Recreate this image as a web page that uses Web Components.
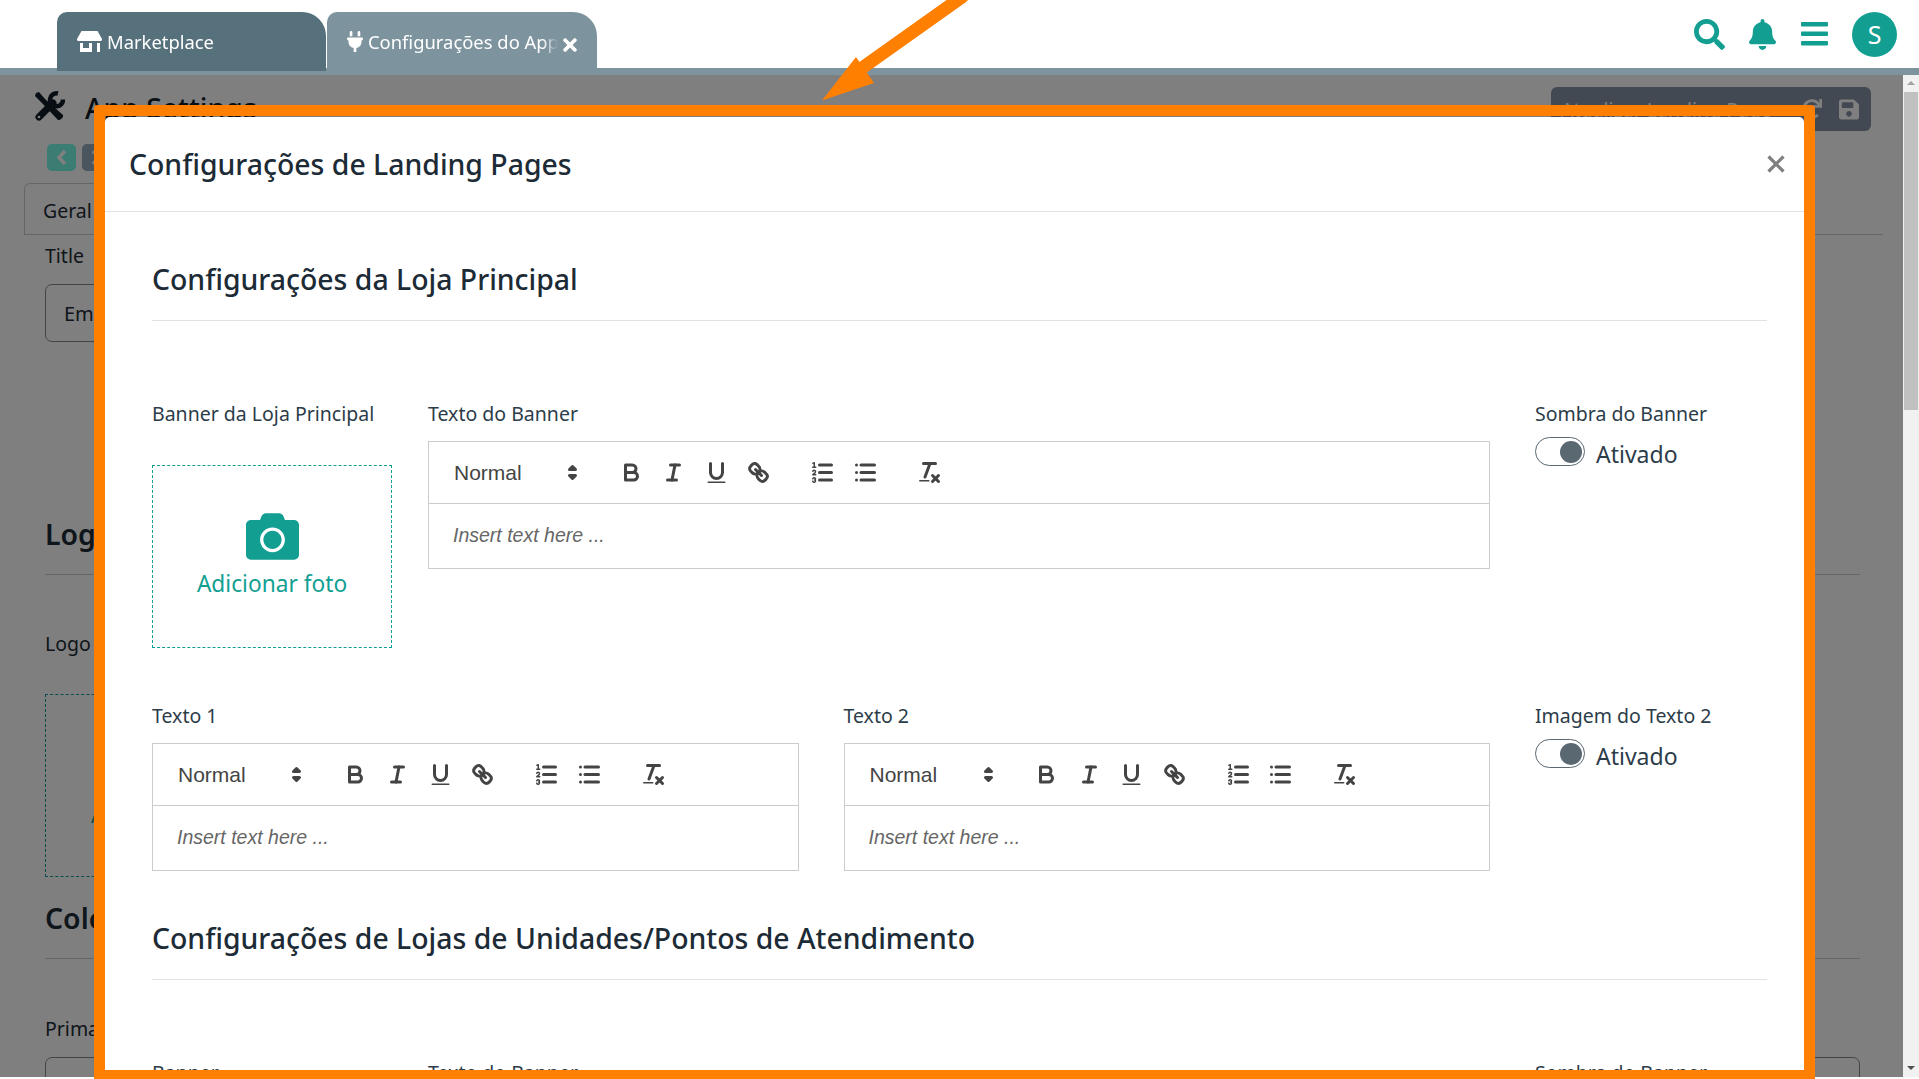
<!DOCTYPE html>
<html lang="pt-BR">
<head>
<meta charset="utf-8">
<title>Configurações de Landing Pages</title>
<style>
    html, body { margin: 0; height: 100%; overflow: hidden; background: #fff; }
    body { font-family: "Noto Sans", "Open Sans", sans-serif; color: #2c3c49; }
    .shell { position: relative; width: 1919px; height: 1079px; overflow: hidden; }
    .main { position: relative; display: flex; height: 1002px; }
    .canvas { position: relative; flex: 1; min-width: 0; overflow: hidden; }
    .row-1 { display: grid; grid-template-columns: 276px 1fr 232px; margin-top: 79px; }
    .row-2 { display: grid; grid-template-columns: 1fr 1fr 232px; column-gap: 45px; margin: 55px 0 -1px; }
    .row-1 .mid { margin-right: 45px; }
</style>
</head>
<body>
<div class="shell">
    <app-topbar>
        <app-tab icon="store" active>Marketplace</app-tab>
        <app-tab icon="plug" closable>Configurações do App</app-tab>
    </app-topbar>
    <div class="main">
        <div class="canvas">
            <settings-page></settings-page>
            <modal-dialog heading="Configurações de Landing Pages">
                <section-heading>Configurações da Loja Principal</section-heading>
                <div class="row-1">
                    <form-field label="Banner da Loja Principal"><upload-box></upload-box></form-field>
                    <form-field class="mid" label="Texto do Banner"><rich-editor></rich-editor></form-field>
                    <form-field label="Sombra do Banner"><toggle-switch>Ativado</toggle-switch></form-field>
                </div>
                <div class="row-2">
                    <form-field label="Texto 1"><rich-editor></rich-editor></form-field>
                    <form-field label="Texto 2"><rich-editor></rich-editor></form-field>
                    <form-field label="Imagem do Texto 2"><toggle-switch>Ativado</toggle-switch></form-field>
                </div>
                <section-heading>Configurações de Lojas de Unidades/Pontos de Atendimento</section-heading>
                <div class="row-1">
                    <form-field label="Banner"></form-field>
                    <form-field class="mid" label="Texto do Banner"></form-field>
                    <form-field label="Sombra do Banner"></form-field>
                </div>
            </modal-dialog>
        </div>
        <page-scrollbar></page-scrollbar>
    </div>
    <arrow-annotation></arrow-annotation>
</div>

<script>
(function(){
    const icons = {
        store: `<svg width="25" height="21" viewBox="0 0 25 21" fill="currentColor"><path d="M4.500 0h16l4.500 8c.3.8-.2 2-1.300 2H1.300C.2 10-.3 8.800 0 8z"/><path d="M3 12h12v9H3zM20 12h3v9h-3z"/><path d="M6 12h6v5H6z" fill="#56707c"/></svg>`,
        plug: `<svg width="16" height="21" viewBox="0 0 384 512" fill="currentColor"><path d="M320,32a32,32,0,0,0-64,0v96h64Zm48,128H16A16,16,0,0,0,0,176v32a16,16,0,0,0,16,16H32v32A160.070,160.070,0,0,0,160,412.800V512h64V412.800A160.070,160.070,0,0,0,352,256V224h16a16,16,0,0,0,16-16V176A16,16,0,0,0,368,160ZM128,32a32,32,0,0,0-64,0v96h64Z"/></svg>`,
        times: `<svg width="14" height="20" viewBox="0 0 352 512" fill="currentColor"><path d="M242.720 256l100.070-100.070c12.280-12.280 12.280-32.190 0-44.480l-22.240-22.240c-12.280-12.280-32.190-12.280-44.480 0L176 189.280 75.930 89.210c-12.280-12.280-32.190-12.280-44.480 0L9.210 111.450c-12.280 12.280-12.280 32.190 0 44.480L109.280 256 9.210 356.070c-12.280 12.280-12.280 32.190 0 44.480l22.240 22.240c12.280 12.280 32.200 12.280 44.480 0L176 322.720l100.070 100.070c12.280 12.280 32.200 12.280 44.480 0l22.240-22.240c12.280-12.280 12.280-32.190 0-44.480L242.720 256z"/></svg>`,
        search: `<svg width="31" height="31" viewBox="0 0 512 512" fill="currentColor"><path d="M505 442.700L405.300 343c-4.500-4.500-10.600-7-17-7H372c27.600-35.300 44-79.700 44-128C416 93.100 322.900 0 208 0S0 93.100 0 208s93.100 208 208 208c48.300 0 92.700-16.400 128-44v16.300c0 6.400 2.500 12.500 7 17l99.700 99.700c9.400 9.400 24.600 9.400 33.900 0l28.300-28.300c9.400-9.400 9.400-24.600.1-34zM208 336c-70.700 0-128-57.200-128-128 0-70.700 57.200-128 128-128 70.700 0 128 57.200 128 128 0 70.700-57.200 128-128 128z"/></svg>`,
        bell: `<svg width="27" height="31" viewBox="0 0 448 512" fill="currentColor"><path d="M224 512c35.320 0 63.970-28.650 63.970-64H160.030c0 35.350 28.650 64 63.970 64zm215.390-149.710c-19.320-20.760-55.470-51.990-55.470-154.290 0-77.700-54.480-139.900-127.940-155.160V32c0-17.670-14.320-32-31.980-32s-31.980 14.330-31.980 32v20.840C118.560 68.100 64.080 130.300 64.080 208c0 102.300-36.150 133.530-55.470 154.290-6 6.450-8.660 14.160-8.610 21.710.11 16.400 12.980 32 32.100 32h383.800c19.120 0 32-15.600 32.100-32 .05-7.550-2.610-15.270-8.610-21.710z"/></svg>`,
        camera: `<svg width="53" height="53" viewBox="0 0 512 512" fill="currentColor"><path d="M512 144v288c0 26.500-21.500 48-48 48H48c-26.500 0-48-21.500-48-48V144c0-26.500 21.500-48 48-48h88l12.300-32.900c7-18.700 24.900-31.100 44.900-31.100h125.500c20 0 37.900 12.400 44.900 31.100L376 96h88c26.500 0 48 21.500 48 48zM376 288c0-66.200-53.800-120-120-120s-120 53.800-120 120 53.800 120 120 120 120-53.800 120-120zm-32 0c0 48.500-39.500 88-88 88s-88-39.500-88-88 39.500-88 88-88 88 39.500 88 88z"/></svg>`,
        save: `<svg width="20" height="23" viewBox="0 0 448 512" fill="currentColor"><path d="M433.941 129.941l-83.882-83.882A48 48 0 0 0 316.118 32H48C21.490 32 0 53.490 0 80v352c0 26.510 21.490 48 48 48h352c26.510 0 48-21.490 48-48V163.882a48 48 0 0 0-14.059-33.941zM224 416c-35.346 0-64-28.654-64-64 0-35.346 28.654-64 64-64s64 28.654 64 64c0 35.346-28.654 64-64 64zm96-304.520V212c0 6.627-5.373 12-12 12H76c-6.627 0-12-5.373-12-12V108c0-6.627 5.373-12 12-12h228.520c3.183 0 6.235 1.264 8.485 3.515l3.480 3.480A11.996 11.996 0 0 1 320 111.480z"/></svg>`,
        redo: `<svg width="20" height="20" viewBox="0 0 512 512" fill="currentColor"><path d="M500.330 0h-47.410a12 12 0 0 0-12 12.570l4 82.760A247.420 247.420 0 0 0 256 8C119.340 8 7.900 119.530 8 256.190 8.100 393.070 119.100 504 256 504a247.100 247.100 0 0 0 166.180-63.910 12 12 0 0 0 .48-17.430l-34-34a12 12 0 0 0-16.380-.55A176 176 0 1 1 402.100 157.800l-101.530-4.870a12 12 0 0 0-12.570 12v47.410a12 12 0 0 0 12 12h200.330a12 12 0 0 0 12-12V12a12 12 0 0 0-12-12z"/></svg>`
    };

    // ---- top bar
    const topbarTemplate = document.createElement('template');
    topbarTemplate.innerHTML = `
        <style>
            :host{
                display: flex;
                box-sizing: border-box;
                height: 75px;
                padding-left: 57px;
                background: #fff;
                border-bottom: 7px solid #7d939e;
            }
            .tabs{
                display: flex;
                gap: 1px;
                align-items: flex-end;
                height: 71px;
            }
            .actions{
                display: flex;
                align-items: center;
                margin-left: auto;
                padding-right: 22px;
                color: #129f92;
            }
            .actions svg{
                display: block;
            }
            .search{ margin-right: 24px; }
            .bell{ margin-right: 25px; }
            .menu{ margin-right: 24px; }
            .avatar{
                width: 45px;
                height: 45px;
                border-radius: 50%;
                background: #129f92;
                color: #fff;
                font-size: 25px;
                line-height: 45px;
                text-align: center;
            }
        </style>
        <div class="tabs"><slot></slot></div>
        <div class="actions">
            <span class="search">${icons.search}</span>
            <span class="bell">${icons.bell}</span>
            <svg class="menu" width="27" height="24" viewBox="0 0 27 24" fill="currentColor"><rect y="0" width="27" height="4.500" rx="1"/><rect y="9.500" width="27" height="4.500" rx="1"/><rect y="19" width="27" height="4.500" rx="1"/></svg>
            <div class="avatar">S</div>
        </div>
    `;
    window.customElements.define('app-topbar', class extends HTMLElement {
        constructor() {
            super();
            this.attachShadow({mode: 'open'});
            this.shadowRoot.appendChild(topbarTemplate.content.cloneNode(true));
        }
    });

    // ---- tab
    const tabTemplate = document.createElement('template');
    tabTemplate.innerHTML = `
        <style>
            :host{
                display: flex;
                align-items: flex-start;
                box-sizing: border-box;
                width: 270px;
                height: 59px;
                padding: 18px 20px 0 20px;
                background: #7d939e;
                border-radius: 10px 24px 0 0;
                color: #fff;
                font-size: 18.400px;
                line-height: 24px;
            }
            :host([active]){
                background: #56707c;
                width: 269px;
            }
            .icon{
                display: block;
                flex: none;
                margin: 1px 5px 0 0;
            }
            .icon svg{ display: block; }
            .label{
                flex: 1;
                min-width: 0;
                white-space: nowrap;
                overflow: hidden;
                -webkit-mask-image: linear-gradient(to right, #000 92%, transparent 100%);
                mask-image: linear-gradient(to right, #000 92%, transparent 100%);
            }
            .close{
                flex: none;
                margin: 5px 0 0 5px;
                display: none;
            }
            .close svg{ display: block; }
            :host([closable]) .close{ display: block; }
        </style>
        <span class="icon"></span>
        <span class="label"><slot></slot></span>
        <span class="close">${icons.times}</span>
    `;
    window.customElements.define('app-tab', class extends HTMLElement {
        constructor() {
            super();
            this.attachShadow({mode: 'open'});
            this.shadowRoot.appendChild(tabTemplate.content.cloneNode(true));
        }
        connectedCallback() {
            this.shadowRoot.querySelector('.icon').innerHTML = icons[this.getAttribute('icon')] || '';
        }
    });

    // ---- the page behind the dialog
    const pageTemplate = document.createElement('template');
    pageTemplate.innerHTML = `
        <style>
            :host{
                display: block;
                box-sizing: border-box;
                height: 1002px;
                overflow: hidden;
                background: #fff;
                color: #1c2b36;
                padding: 12px 0 0 0;
            }
            .head{
                display: flex;
                align-items: flex-start;
                box-sizing: border-box;
                height: 44px;
                padding: 4px 32px 0 34px;
            }
            .head h1{
                margin: 0 0 0 20px;
                font-size: 28.400px;
                line-height: 34px;
                font-weight: 500;
                color: #111c26;
            }
            .save{
                display: flex;
                align-items: center;
                box-sizing: border-box;
                margin: -4px 0 0 auto;
                width: 320px;
                height: 44px;
                padding: 0 12px 0 10px;
                border-radius: 6px;
                background: #8492a6;
                color: #fff;
                font-size: 19.500px;
            }
            .save span{ flex: 1; white-space: nowrap; }
            .save svg{ display: block; margin-left: 17px; }
            .nav{
                display: flex;
                gap: 6px;
                margin: 13px 0 0 47px;
            }
            .nav div{
                display: flex;
                align-items: center;
                justify-content: center;
                width: 29px;
                height: 27px;
                border-radius: 5px;
            }
            .back{ background: #76fae4; }
            .next{ background: #94aabc; }
            .tabbar{
                display: flex;
                margin: 12px 20px 0 24px;
                height: 51px;
                border-bottom: 1px solid #ccc;
            }
            .tab{
                width: 180px;
                box-sizing: border-box;
                padding: 13px 0 0 18px;
                border: 1px solid #ccc;
                border-bottom: 0;
                border-radius: 6px 6px 0 0;
                font-size: 19.500px;
                line-height: 28px;
            }
            .body{
                padding: 7px 43px 0 45px;
            }
            label{
                display: block;
                font-size: 19.500px;
                line-height: 28px;
            }
            .input{
                box-sizing: border-box;
                width: 500px;
                height: 58px;
                margin-top: 14px;
                padding: 15px 0 0 18px;
                border: 1px solid #888;
                border-radius: 7px;
                font-size: 20px;
                line-height: 28px;
            }
            h2{
                margin: 0;
                font-size: 28.400px;
                line-height: 36px;
                font-weight: 600;
                padding-bottom: 22px;
                border-bottom: 1px solid #ccc;
            }
            .logo-h{ margin-top: 174px; }
            .logo-l{ margin-top: 55px; }
            .drop{
                box-sizing: border-box;
                width: 60px;
                height: 183px;
                margin-top: 36px;
                padding: 106px 0 0 45px;
                border: 1px dashed #129f92;
                border-right: 0;
                overflow: hidden;
                white-space: nowrap;
                color: #129f92;
                font-size: 22.700px;
                line-height: 28px;
            }
            .col-h{ margin-top: 23px; }
            .pri-l{ margin-top: 56px; }
            .wide{ width: 100%; }
        </style>
        <div class="head">
            <svg width="31" height="30" viewBox="0 0 31 30">
                <path d="M2 2l3-1 6 7 18 16c1 2-3 6-5 5L7 11 1 5z" fill="#111c26"/>
                <path d="M5 26l14-14" stroke="#111c26" stroke-width="7" stroke-linecap="round"/>
                <path d="M24 2.500A6.500 6.500 0 1 0 29 8.500" fill="none" stroke="#111c26" stroke-width="4.500"/>
                <circle cx="5" cy="26" r="1.300" fill="#fff"/>
            </svg>
            <h1>App Settings</h1>
            <div class="save"><span>Atualizar Landing Page</span>${icons.redo}${icons.save}</div>
        </div>
        <div class="nav">
            <div class="back"><svg width="11" height="17" viewBox="0 0 11 17" fill="none" stroke="#fff" stroke-width="3.500"><path d="M9 2L3 8.500 9 15"/></svg></div>
            <div class="next"><svg width="11" height="17" viewBox="0 0 11 17" fill="none" stroke="#fff" stroke-width="3.500"><path d="M2 2l6 6.500L2 15"/></svg></div>
        </div>
        <div class="tabbar"><div class="tab">Geral</div></div>
        <div class="body">
            <label>Title</label>
            <div class="input">Empresa</div>
            <h2 class="logo-h">Logo</h2>
            <label class="logo-l">Logo</label>
            <div class="drop">Adicionar foto</div>
            <h2 class="col-h">Colors</h2>
            <label class="pri-l">Primary</label>
            <div class="input wide"></div>
        </div>
    `;
    window.customElements.define('settings-page', class extends HTMLElement {
        constructor() {
            super();
            this.attachShadow({mode: 'open'});
            this.shadowRoot.appendChild(pageTemplate.content.cloneNode(true));
        }
    });

    // ---- scrollbar
    const scrollTemplate = document.createElement('template');
    scrollTemplate.innerHTML = `
        <style>
            :host{
                display: flex;
                flex-direction: column;
                align-items: center;
                flex: none;
                width: 16px;
                background: #f1f1f1;
            }
            .up, .down{
                width: 0;
                height: 0;
                border-left: 4px solid transparent;
                border-right: 4px solid transparent;
            }
            .up{
                margin: 6px 0 7px;
                border-bottom: 4px solid #a3a3a3;
            }
            .thumb{
                width: 14px;
                height: 318px;
                background: #c1c1c1;
            }
            .down{
                margin: auto 0 7px;
                border-top: 4px solid #505050;
            }
        </style>
        <div class="up"></div>
        <div class="thumb"></div>
        <div class="down"></div>
    `;
    window.customElements.define('page-scrollbar', class extends HTMLElement {
        constructor() {
            super();
            this.attachShadow({mode: 'open'});
            this.shadowRoot.appendChild(scrollTemplate.content.cloneNode(true));
        }
    });

    // ---- modal
    const modalTemplate = document.createElement('template');
    modalTemplate.innerHTML = `
        <style>
            :host{
                display: block;
                position: absolute;
                inset: 0;
                padding: 42px 0 0 105px;
                background: rgba(0,0,0,.5);
            }
            .dialog{
                width: 1699px;
                height: 960px;
                overflow: hidden;
                background: #fff;
                border-radius: 5px 5px 0 0;
                color: #2c3c49;
            }
            header{
                display: flex;
                align-items: center;
                box-sizing: border-box;
                height: 95px;
                padding: 0 19px 0 24px;
                border-bottom: 1px solid #e2e2e2;
            }
            h5{
                margin: 0;
                flex: 1;
                font-size: 28.400px;
                font-weight: 500;
                line-height: 34px;
                color: #1c2b36;
            }
            header svg{ display: block; }
            .body{
                padding: 0 37px 0 47px;
            }
        </style>
        <div class="dialog">
            <header>
                <h5></h5>
                <svg width="18" height="18" viewBox="0 0 18 18" stroke="#808080" stroke-width="3.200"><path d="M1.500 1.500l15 15M16.500 1.500l-15 15"/></svg>
            </header>
            <div class="body"><slot></slot></div>
        </div>
    `;
    window.customElements.define('modal-dialog', class extends HTMLElement {
        constructor() {
            super();
            this.attachShadow({mode: 'open'});
            this.shadowRoot.appendChild(modalTemplate.content.cloneNode(true));
        }
        connectedCallback() {
            this.shadowRoot.querySelector('h5').textContent = this.getAttribute('heading');
        }
    });

    // ---- section heading
    const sectionTemplate = document.createElement('template');
    sectionTemplate.innerHTML = `
        <style>
            :host{
                display: block;
                padding: 50px 0 24px;
                border-bottom: 1px solid #e2e2e2;
                font-size: 28.400px;
                font-weight: 500;
                line-height: 34px;
                color: #1c2b36;
            }
            :host(:not(:first-child)){
                padding-top: 51px;
            }
        </style>
        <slot></slot>
    `;
    window.customElements.define('section-heading', class extends HTMLElement {
        constructor() {
            super();
            this.attachShadow({mode: 'open'});
            this.shadowRoot.appendChild(sectionTemplate.content.cloneNode(true));
        }
    });

    // ---- label + control
    const fieldTemplate = document.createElement('template');
    fieldTemplate.innerHTML = `
        <style>
            :host{
                display: block;
                min-width: 0;
            }
            label{
                display: block;
                font-size: 19.500px;
                line-height: 28px;
                margin-bottom: 13px;
                color: #2c3c49;
            }
        </style>
        <label></label>
        <slot></slot>
    `;
    window.customElements.define('form-field', class extends HTMLElement {
        constructor() {
            super();
            this.attachShadow({mode: 'open'});
            this.shadowRoot.appendChild(fieldTemplate.content.cloneNode(true));
        }
        connectedCallback() {
            this.shadowRoot.querySelector('label').textContent = this.getAttribute('label');
        }
    });

    // ---- photo box
    const uploadTemplate = document.createElement('template');
    uploadTemplate.innerHTML = `
        <style>
            :host{
                display: flex;
                flex-direction: column;
                align-items: center;
                box-sizing: border-box;
                width: 240px;
                height: 183px;
                margin-top: 37px;
                margin-bottom: -1px;
                padding-top: 44px;
                border: 1px dashed #129f92;
                color: #129f92;
                font-size: 22.700px;
                line-height: 30px;
            }
            svg{ display: block; margin-bottom: 6px; }
        </style>
        ${icons.camera}
        <span>Adicionar foto</span>
    `;
    window.customElements.define('upload-box', class extends HTMLElement {
        constructor() {
            super();
            this.attachShadow({mode: 'open'});
            this.shadowRoot.appendChild(uploadTemplate.content.cloneNode(true));
        }
    });

    // ---- quill style editor
    const editorTemplate = document.createElement('template');
    editorTemplate.innerHTML = `
        <style>
            :host{
                display: block;
                box-sizing: border-box;
                height: 128px;
                border: 1px solid #ccc;
                font-family: "Liberation Sans", Arial, sans-serif;
                color: #444;
            }
            .toolbar{
                display: flex;
                align-items: center;
                box-sizing: border-box;
                height: 62px;
                padding-left: 25px;
                border-bottom: 1px solid #ccc;
            }
            .picker{
                display: flex;
                align-items: center;
                justify-content: space-between;
                box-sizing: border-box;
                width: 156px;
                padding-right: 24px;
                font-size: 21px;
            }
            .group{
                display: flex;
                margin-right: 21.500px;
            }
            .btn{
                display: flex;
                align-items: center;
                justify-content: center;
                width: 42.500px;
            }
            svg{
                display: block;
                width: 27px;
                height: 27px;
                fill: none;
                stroke: #444;
                stroke-width: 2;
                stroke-linecap: round;
                stroke-linejoin: round;
            }
            .f{ fill: #444; stroke: none; }
            .t{ stroke-width: 1; }
            .content{
                padding: 15px 24px;
                font-size: 19.500px;
                line-height: 32px;
                font-style: italic;
                color: #666;
            }
        </style>
        <div class="toolbar">
            <div class="picker">
                <span>Normal</span>
                <svg viewBox="0 0 18 18"><polygon points="7 11 9 13 11 11 7 11" class="f" style="stroke:#444;stroke-width:2"/><polygon points="7 7 9 5 11 7 7 7" class="f" style="stroke:#444;stroke-width:2"/></svg>
            </div>
            <div class="group">
                <span class="btn"><svg viewBox="0 0 18 18"><path d="M5,4H9.500A2.500,2.500,0,0,1,12,6.500v0A2.500,2.500,0,0,1,9.500,9H5A0,0,0,0,1,5,9V4A0,0,0,0,1,5,4Z"/><path d="M5,9h5.500A2.500,2.500,0,0,1,13,11.500v0A2.500,2.500,0,0,1,10.500,14H5a0,0,0,0,1,0,0V9A0,0,0,0,1,5,9Z"/></svg></span>
                <span class="btn"><svg viewBox="0 0 18 18"><line x1="7" x2="13" y1="4" y2="4"/><line x1="5" x2="11" y1="14" y2="14"/><line x1="8" x2="10" y1="14" y2="4"/></svg></span>
                <span class="btn"><svg viewBox="0 0 18 18"><path d="M5,3V9a4.012,4.012,0,0,0,4,4H9a4.012,4.012,0,0,0,4-4V3"/><rect class="f" height="1" rx="0.500" ry="0.500" width="12" x="3" y="15"/></svg></span>
                <span class="btn"><svg viewBox="0 0 18 18"><line x1="7" x2="11" y1="7" y2="11"/><path d="M8.900,4.577a3.476,3.476,0,0,1,.36,4.679A3.476,3.476,0,0,1,4.577,8.900C3.185,7.500,2.035,6.400,4.217,4.217S7.500,3.185,8.900,4.577Z"/><path d="M13.423,9.100a3.476,3.476,0,0,0-4.679-.36,3.476,3.476,0,0,0,.36,4.679c1.392,1.392,2.500,2.542,4.679.36S14.815,10.500,13.423,9.100Z"/></svg></span>
            </div>
            <div class="group">
                <span class="btn"><svg viewBox="0 0 18 18"><line x1="7" x2="15" y1="4" y2="4"/><line x1="7" x2="15" y1="9" y2="9"/><line x1="7" x2="15" y1="14" y2="14"/><line class="t" x1="2.500" x2="4.500" y1="5.500" y2="5.500"/><path class="f" d="M3.500,6A0.500,0.500,0,0,1,3,5.500V3.085l-0.276.138A0.500,0.500,0,0,1,2.053,3c-0.124-.247-0.023-0.324.224-0.447l1-.5A0.500,0.500,0,0,1,4,2.500v3A0.500,0.500,0,0,1,3.500,6Z"/><path class="t" d="M4.500,10.500h-2c0-.234,1.850-1.076,1.850-2.234A0.959,0.959,0,0,0,2.500,8.156"/><path class="t" d="M2.500,14.846a0.959,0.959,0,0,0,1.850-.109A0.700,0.700,0,0,0,3.750,14a0.688,0.688,0,0,0,.6-0.736,0.959,0.959,0,0,0-1.850-.109"/></svg></span>
                <span class="btn"><svg viewBox="0 0 18 18"><line x1="6" x2="15" y1="4" y2="4"/><line x1="6" x2="15" y1="9" y2="9"/><line x1="6" x2="15" y1="14" y2="14"/><line x1="3" x2="3" y1="4" y2="4"/><line x1="3" x2="3" y1="9" y2="9"/><line x1="3" x2="3" y1="14" y2="14"/></svg></span>
            </div>
            <div class="group">
                <span class="btn"><svg viewBox="0 0 18 18"><line x1="5" x2="13" y1="3" y2="3"/><line x1="6" x2="9.350" y1="12" y2="3"/><line x1="11" x2="15" y1="11" y2="15"/><line x1="15" x2="11" y1="11" y2="15"/><rect class="f" height="1" rx="0.500" ry="0.500" width="7" x="2" y="14"/></svg></span>
            </div>
        </div>
        <div class="content">Insert text here ...</div>
    `;
    window.customElements.define('rich-editor', class extends HTMLElement {
        constructor() {
            super();
            this.attachShadow({mode: 'open'});
            this.shadowRoot.appendChild(editorTemplate.content.cloneNode(true));
        }
    });

    // ---- switch
    const toggleTemplate = document.createElement('template');
    toggleTemplate.innerHTML = `
        <style>
            :host{
                display: flex;
                align-items: flex-start;
                margin-top: -4px;
                font-size: 23px;
                line-height: 30px;
                color: #2c3c49;
            }
            .track{
                display: flex;
                justify-content: flex-end;
                align-items: center;
                box-sizing: border-box;
                width: 50px;
                height: 29px;
                padding-right: 2px;
                margin-right: 11px;
                border: 1px solid #5a6872;
                border-radius: 15px;
                background: #fff;
            }
            .knob{
                width: 22px;
                height: 22px;
                border-radius: 50%;
                background: #5a6872;
            }
            span{ margin-top: 2px; }
        </style>
        <div class="track"><div class="knob"></div></div>
        <span><slot></slot></span>
    `;
    window.customElements.define('toggle-switch', class extends HTMLElement {
        constructor() {
            super();
            this.attachShadow({mode: 'open'});
            this.shadowRoot.appendChild(toggleTemplate.content.cloneNode(true));
        }
    });

    // ---- orange arrow and frame drawn on top of the screenshot
    const arrowTemplate = document.createElement('template');
    arrowTemplate.innerHTML = `
        <style>
            :host{
                display: block;
                position: absolute;
                inset: 0;
                pointer-events: none;
            }
            svg{ display: block; }
        </style>
        <svg width="1919" height="1079" viewBox="0 0 1919 1079" fill="none">
            <path d="M94 1079V109a4 4 0 0 1 4-4H1811a4 4 0 0 1 4 4V1079H94ZM105 116V1070H1804V116Z" fill="#ff7f00" fill-rule="evenodd"/>
            <path d="M962 -3L862 68" stroke="#ff7f00" stroke-width="13" stroke-linecap="round"/>
            <polygon points="822,100.500 856,57 874,83" fill="#ff7f00"/>
        </svg>
    `;
    window.customElements.define('arrow-annotation', class extends HTMLElement {
        constructor() {
            super();
            this.attachShadow({mode: 'open'});
            this.shadowRoot.appendChild(arrowTemplate.content.cloneNode(true));
        }
    });
})();
</script>
</body>
</html>
